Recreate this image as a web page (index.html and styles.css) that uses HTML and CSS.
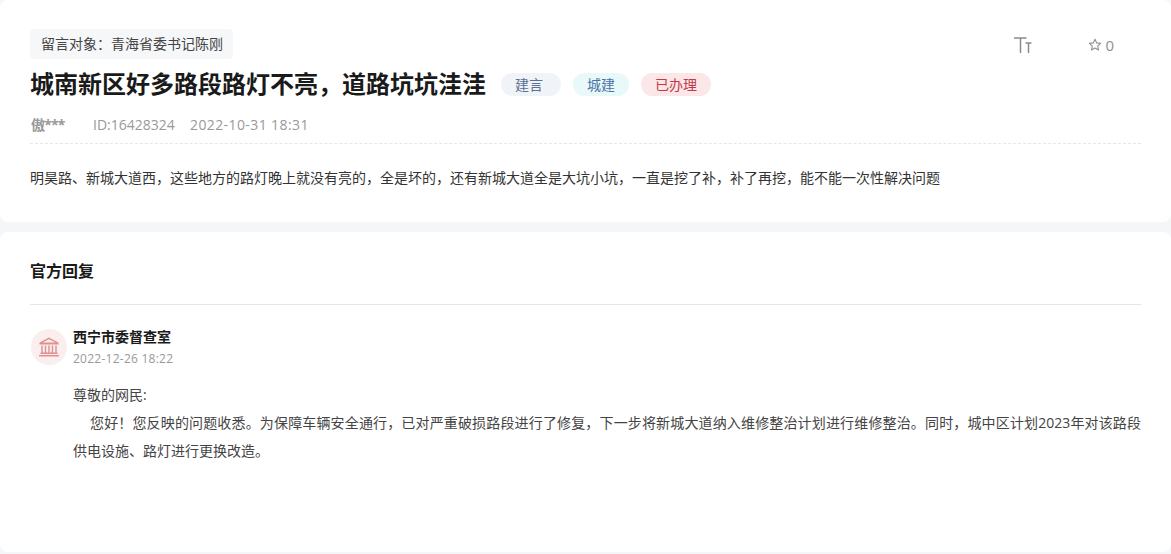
FILE: index.html
```html
<!DOCTYPE html>
<html lang="zh-CN">
<head>
<meta charset="utf-8">
<title>留言详情</title>
<link rel="stylesheet" href="styles.css">
</head>
<body>
<section class="card detail">
  <div class="top-row">
    <span class="target">留言对象：青海省委书记陈刚</span>
    <div class="tools">
      <svg class="font-tool" viewBox="0 0 18 16" width="18" height="16"><path d="M0 1h12.500M6.500 1v15M11.500 6h6M14.500 6v10" fill="none" stroke="#8a8a8a" stroke-width="1.500"/></svg>
      <span class="fav">
        <svg class="star" viewBox="0 0 14 14" width="14" height="14"><path d="M7 1.300l1.700 3.600 3.900.5-2.900 2.700.8 3.900L7 10.100l-3.500 1.900.8-3.900-2.900-2.700 3.900-.5z" fill="none" stroke="#8f8f8f" stroke-width="1.100" stroke-linejoin="round"/></svg>
        <span class="fav-count">0</span>
      </span>
    </div>
  </div>
  <div class="title-row">
    <h1 class="title">城南新区好多路段路灯不亮，道路坑坑洼洼</h1>
    <span class="tag tag-type">建言</span>
    <span class="tag tag-domain">城建</span>
    <span class="tag tag-state">已办理</span>
  </div>
  <div class="meta">
    <span class="author">傲***</span>
    <span class="msg-id">ID:16428324</span>
    <span class="msg-time">2022-10-31 18:31</span>
  </div>
  <p class="content">明昊路、新城大道西，这些地方的路灯晚上就没有亮的，全是坏的，还有新城大道全是大坑小坑，一直是挖了补，补了再挖，能不能一次性解决问题</p>
</section>
<section class="card reply">
  <h2 class="reply-heading">官方回复</h2>
  <div class="reply-head">
    <span class="avatar">
      <svg viewBox="0 0 22 20" width="22" height="20"><g fill="none" stroke="#e08f8f" stroke-width="1.400"><path d="M2 6.200L11 1.400l9 4.800z"/><path d="M1.500 6.700h19M4 8.500v7M7.500 8.500v7M11 8.500v7M14.500 8.500v7M18 8.500v7M2.500 16.200h17M1 18.800h20"/></g></svg>
    </span>
    <div class="org">
      <div class="org-name">西宁市委督查室</div>
      <div class="org-time">2022-12-26 18:22</div>
    </div>
  </div>
  <div class="reply-body">
    <p>尊敬的网民:</p>
    <p class="indented">您好！您反映的问题收悉。为保障车辆安全通行，已对严重破损路段进行了修复，下一步将新城大道纳入维修整治计划进行维修整治。同时，城中区计划2023年对该路段供电设施、路灯进行更换改造。</p>
  </div>
</section>
</body>
</html>
```

FILE: styles.css
```css
* { box-sizing: border-box; }
html, body { margin: 0; padding: 0; }
body {
  width: 1171px;
  height: 554px;
  overflow: hidden;
  background: #f5f6f8;
  font-family: "Open Sans", "Noto Sans CJK SC", sans-serif;
  color: #333;
}
.card { background: #fff; border-radius: 8px; padding: 0 30px; }
.detail { height: 222px; padding-top: 29px; }
.reply { height: 320px; margin-top: 10px; padding-top: 27px; }
.top-row { display: flex; justify-content: space-between; align-items: flex-start; }
.target {
  display: block;
  height: 30px;
  line-height: 30px;
  padding: 0 10px 0 11px;
  background: #f6f7f9;
  border-radius: 4px;
  font-size: 14px;
  color: #444;
}
.tools { display: flex; align-items: center; height: 32px; padding-right: 27px; color: #8f8f8f; }
.font-tool { display: block; margin-right: 56px; }
.fav { display: flex; align-items: center; gap: 3px; font-size: 14px; }
.fav-count { font-size: 15px; }
.star { display: block; }
.title-row { display: flex; align-items: center; height: 36px; margin-top: 5px; }
.title { margin: 0 15px 0 0; font-size: 24px; line-height: 36px; font-weight: 700; color: #1a1a1a; }
.tag {
  height: 23px;
  line-height: 23px;
  padding: 0 14px;
  margin-right: 12px;
  border-radius: 12px;
  font-size: 14px;
}
.tag-type { padding-right: 18px; background: #f0f4f8; color: #5a6f94; }
.tag-domain { background: #e9f9f9; color: #4a74a8; }
.tag-state { background: #fbe6e8; color: #c23a4a; }
.meta {
  display: flex;
  height: 38px;
  padding-top: 9px;
  margin-top: 4px;
  border-bottom: 1px dashed #e6e6e6;
  font-size: 14px;
  line-height: 20px;
  color: #999;
}
.author { width: 62px; margin-left: 1px; font-weight: 700; letter-spacing: -0.8px; }
.msg-id { width: 97px; }
.msg-time { letter-spacing: 0.4px; }
.content { margin: 24px 0 0; font-size: 14px; line-height: 20px; color: #333; }
.reply-heading {
  margin: 0;
  height: 46px;
  border-bottom: 1px solid #e6e6e6;
  font-size: 16px;
  line-height: 24px;
  font-weight: 700;
  color: #1a1a1a;
}
.reply-head { display: flex; align-items: flex-start; margin: 24px 0 0 1px; gap: 6px; }
.avatar {
  display: flex;
  align-items: center;
  justify-content: center;
  width: 36px;
  height: 36px;
  border-radius: 50%;
  background: #fbeeee;
}
.org { margin-top: -2px; }
.org-name { font-size: 14px; line-height: 20px; font-weight: 700; color: #1a1a1a; }
.org-time { font-size: 12px; line-height: 18px; margin-top: 3px; color: #999; letter-spacing: 0.25px; }
.reply-body { margin: 13px 0 0 43px; font-size: 14px; line-height: 28px; color: #444; text-align: justify; }
.reply-body p { margin: 0; }
.indented { text-indent: 17px; }
```
